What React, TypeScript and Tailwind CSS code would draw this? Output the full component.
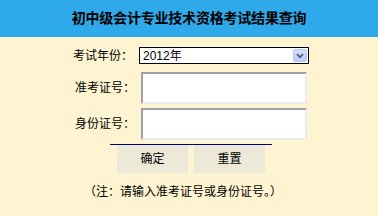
import React from 'react';

const font = { fontFamily: '"Liberation Sans", "Noto Sans CJK SC", sans-serif' };

const TextBox: React.FC = () => (
  <div className="ml-[6px] w-[166px] h-[32px] bg-white border-2 border-t-[#a0a0a0] border-l-[#a0a0a0] border-b-[#ebebeb] border-r-[#ebebeb]" />
);

export default function App() {
  return (
    <div
      className="w-[378px] h-[216px] bg-[#fef4d1] text-black overflow-hidden flex flex-col"
      style={font}
    >
      <div className="h-[37px] bg-[#2ea9e9] flex items-center justify-center">
        <span className="text-[14px] font-bold tracking-[-0.2px]">初中级会计专业技术资格考试结果查询</span>
      </div>

      <div className="flex flex-col pt-[10px]">
        <div className="flex items-center h-[17px]">
          <div className="w-[133px] text-right text-[12px] leading-none">考试年份：</div>
          <div className="ml-[6px] w-[170px] h-[17px] bg-white border border-black flex items-center justify-between pl-[3px] pr-px">
            <span className="text-[12px] leading-none">2012年</span>
            <span className="w-[14px] h-[13px] rounded-[2px] bg-gradient-to-b from-[#d3e0fd] to-[#b8cbf8] border border-[#b4c6f2] flex items-center justify-center">
              <svg width="8" height="6" viewBox="0 0 8 6">
                <path d="M1 1.2 L4 4.2 L7 1.2" fill="none" stroke="#4b5d84" strokeWidth="1.8" />
              </svg>
            </span>
          </div>
        </div>

        <div className="flex items-center mt-[8px]">
          <div className="w-[135px] text-right text-[12px] leading-none">准考证号：</div>
          <TextBox />
        </div>

        <div className="flex items-center mt-[4px]">
          <div className="w-[135px] text-right text-[12px] leading-none">身份证号：</div>
          <TextBox />
        </div>

        <div className="ml-[110px] mt-[4px] w-[162px] border-t border-[#000080] flex gap-[6px] pl-[7px]">
          <button className="w-[71px] h-[28px] bg-[#ece9d8] text-[12px]">确定</button>
          <button className="w-[71px] h-[28px] bg-[#ece9d8] text-[12px]">重置</button>
        </div>

        <div className="mt-[13px] pl-[84px] text-[12px] leading-none">（注：请输入准考证号或身份证号。）</div>
      </div>
    </div>
  );
}
